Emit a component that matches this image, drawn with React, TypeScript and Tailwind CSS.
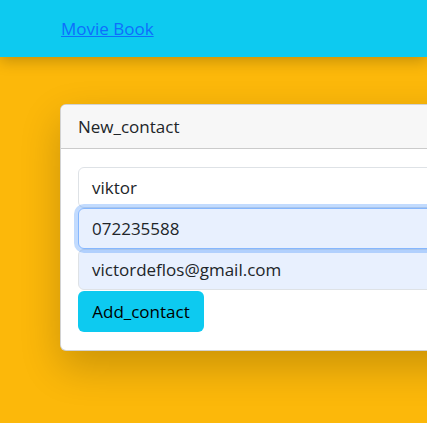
export default function App() {
  const font = { fontFamily: '"Open Sans", "Noto Sans", sans-serif' };
  return (
    <div className="min-h-[423px] w-[427px] overflow-hidden bg-[#fcb80a] text-[#212529]" style={font}>
      <nav className="relative z-10 flex h-[57px] items-center bg-[#0dcaf0] pl-[61px] shadow-[0_4px_14px_rgba(0,0,0,0.22)]">
        <a href="#" className="text-[17px] leading-none text-[#0d6efd] underline">
          Movie Book
        </a>
      </nav>
      <div className="pl-[60px] pt-[47px]">
        <div className="w-[520px] overflow-hidden rounded-[6px] border border-[rgba(0,0,0,0.175)] bg-white shadow-[0_16px_40px_rgba(0,0,0,0.2)]">
          <div className="flex h-[44px] items-center border-b border-[rgba(0,0,0,0.175)] bg-[#f7f7f7] px-[17px] text-[17px]">
            New_contact
          </div>
          <div className="flex flex-col px-[17px] pb-[18px] pt-[18px] text-[17px]">
            <div className="flex h-[41px] items-center rounded-[6px] border border-[#dee2e6] bg-white px-[13px]">
              viktor
            </div>
            <div className="relative z-10 flex h-[41px] items-center rounded-[6px] border border-[#86b7fe] bg-[#e8f0fe] px-[13px] shadow-[0_0_0_4px_rgba(13,110,253,0.25)]">
              072235588
            </div>
            <div className="flex h-[41px] items-center rounded-[6px] border border-[#dee2e6] bg-[#e8f0fe] px-[13px]">
              victordeflos@gmail.com
            </div>
            <div className="flex">
              <div className="mt-[1px] flex h-[41px] w-[126px] items-center justify-center rounded-[6px] bg-[#0dcaf0] text-black">
                Add_contact
              </div>
            </div>
          </div>
        </div>
      </div>
    </div>
  );
}
